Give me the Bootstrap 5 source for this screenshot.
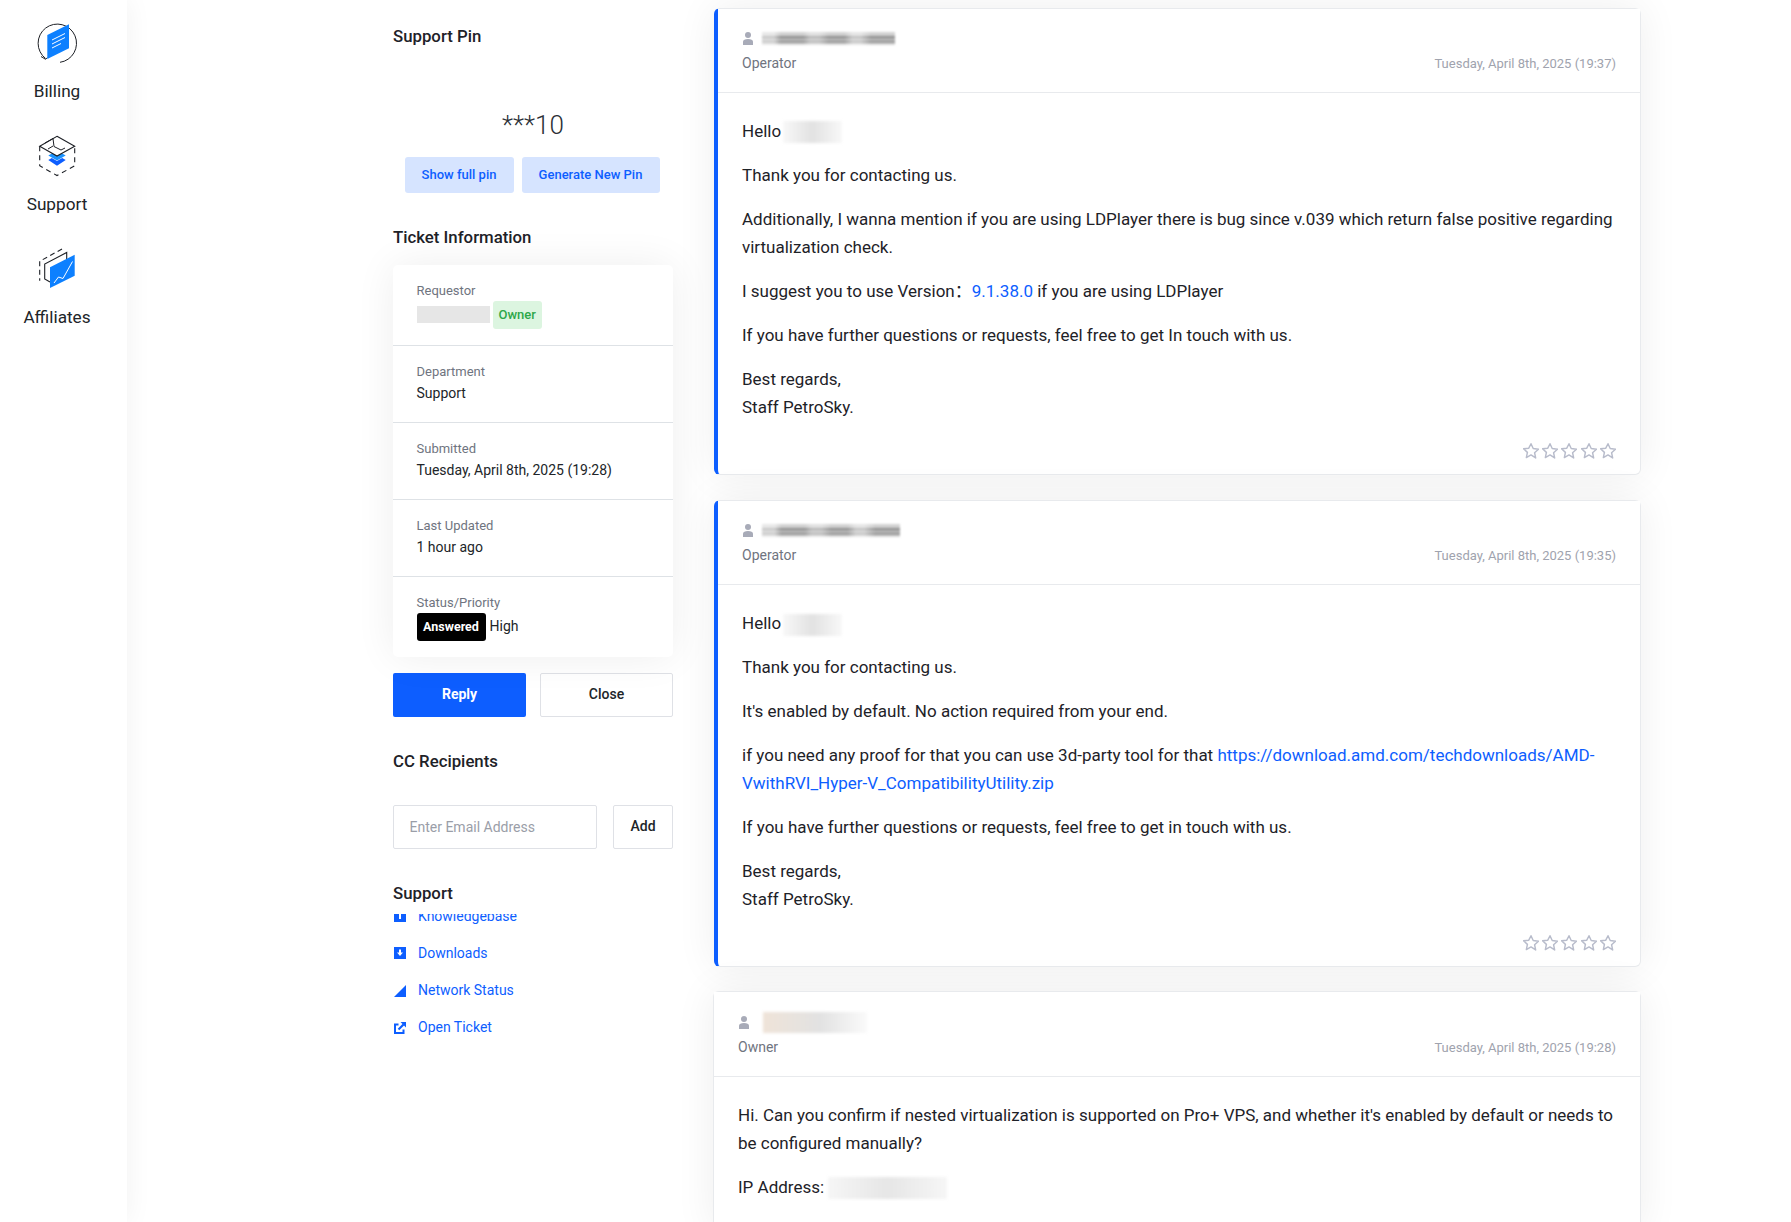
<!DOCTYPE html>
<html lang="en">
<head>
<meta charset="utf-8">
<title>Ticket</title>
<link href="https://cdn.jsdelivr.net/npm/bootstrap@5.3.0/dist/css/bootstrap.min.css" rel="stylesheet">
<style>
  html, body { height: 100%; overflow: hidden; }
  body { font-family: Roboto, "Noto Sans CJK SC", sans-serif; font-size: 17px; color: #1e2228; background: #fff; }
  a { color: #0d5eff; text-decoration: none; }

  /* left rail */
  .rail { width: 127px; flex: none; padding: 20px 13px 0 0; background: #fff; box-shadow: 0 0 26px rgba(0,0,0,.06); z-index: 2; }
  .rail-item { display: block; color: #212529; text-align: center; margin-bottom: 30px; line-height: 24px; font-size: 17.200px; }
  .rail-item svg { display: block; margin: 0 auto 13px; }

  .page { padding-left: 266px; gap: 41px; }
  .side { width: 280px; flex: none; padding-top: 24px; }
  .feed { width: 927px; flex: none; padding-top: 8px; }

  .side h6 { font-size: 16.800px; font-weight: 500; line-height: 24px; margin: 0; }
  .pin { font-size: 26px; font-weight: 300; line-height: 42px; text-align: center; margin: 56px 0 11px; color: #2b2f36; }
  .pin-actions { padding-right: 2px; }
  .btn-soft { background: #d6e4ff; color: #0d5eff; border: 0; font-size: 13px; font-weight: 500; height: 36px; padding: 0; border-radius: 3px; }
  .info { border: 0; border-radius: 8px; box-shadow: 0 0 40px rgba(0,0,0,.07); --bs-list-group-border-color: #e8eaed; }
  .info .list-group-item { padding: 16px 24px 16px 23.500px; }
  .info small { display: block; font-size: 13px; line-height: 20px; color: #6f7480; }
  .info .val { font-size: 14px; line-height: 22px; height: 24px; color: #212529; }
  .info .val.tall { height: 28px; line-height: 26px; }
  .tag { display: inline-block; height: 28px; line-height: 28px; padding: 0 6px; font-size: 13px; font-weight: 500; border-radius: 3px; vertical-align: top; }
  .tag-owner { background: #dcf5e0; color: #2ea84a; margin-left: 3px; }
  .tag-answered { background: #000; color: #fff; font-size: 12.500px; font-weight: 700; margin-right: 4px; width: 69px; text-align: center; padding: 0; }
  .btn-reply { background: #0d5eff; color: #fff; border: 0; height: 44px; padding-bottom: 8px; font-size: 14px; font-weight: 700; border-radius: 2px; }
  .btn-line { background: #fff; color: #212529; border: 1px solid #dfe1e6; height: 44px; padding-bottom: 8px; font-size: 14px; font-weight: 500; border-radius: 2px; }
  .email { height: 44px; width: 204px; border: 1px solid #dfe1e6; border-radius: 2px; font-size: 14px; padding: 0 15.500px; }
  .email::placeholder { color: #9a9ea8; }
  .support-clip { overflow: hidden; margin-top: 9px; }
  .support-clip ul { margin: -16.400px 0 0; padding: 0; list-style: none; font-size: 14px; }
  .support-clip li { height: 37.200px; line-height: 37.200px; display: flex; align-items: center; }
  .support-clip svg { margin: 0 12px 0 1px; flex: none; }

  /* replies */
  .reply-card { border: 1px solid #e8eaed; border-radius: 6px; box-shadow: 0 0 40px rgba(0,0,0,.07); margin-bottom: 24.500px; --bs-card-inner-border-radius: 0; }
  .reply-card.staff { border-left: 4px solid #0d5eff; }
  .reply-card:not(.staff) { margin-left: -1px; }
  .reply-card:not(.staff) .card-header { padding-top: 20px; }
  .reply-card .card-header { background: #fff; padding: 19px 24px 18px; border-bottom: 1px solid #e8eaed; height: 84.500px; }
  .reply-card:first-child .card-header { height: 83.500px; }
  .reply-card .card-body { padding: 24px 24px 14.500px; line-height: 28px; }
  .reply-card:first-child .card-body { padding-bottom: 15.500px; }
  .reply-card p { margin-bottom: 16px; }
  .who { height: 21px; }
  .who svg { margin: 0 9px 0 1px; flex: none; }
  .role { font-size: 14px; line-height: 20px; color: #6f7480; }
  .when { font-size: 13px; line-height: 20px; color: #a0a3ae; margin-bottom: -1px; }
  .stars { gap: 3.300px; height: 16px; margin-top: 22px; }
  .stars svg { display: block; }

  /* blurred-out names */
  .redact { display: inline-block; background: #e4e4e4; filter: blur(1.500px); vertical-align: middle; }
  .r-req { width: 73px; height: 17px; margin: 5px 0 0 0; vertical-align: top; background: #e6e6e6; filter: none; }
  .r-name { width: 133px; height: 13px; filter: blur(1px); background:
    linear-gradient(90deg, rgba(255,255,255,.5) 0 9%, rgba(255,255,255,0) 14% 31%, rgba(255,255,255,.35) 36% 43%, rgba(255,255,255,0) 50% 62%, rgba(255,255,255,.45) 68% 74%, rgba(255,255,255,0) 82% 100%),
    linear-gradient(180deg, #d2d2d2 0 28%, #8e8e8e 28% 48%, #b4b4b4 48% 68%, #9a9a9a 68% 82%, #d6d6d6 82% 100%); }
  .r-name2 { width: 138px; }
  .r-hello { width: 59px; height: 22px; margin-left: -2.500px; background: linear-gradient(90deg, #f8f8f8, #e2e2e2 50%, #f8f8f8); }
  .r-owner { width: 104px; height: 21px; margin-left: 5px; background: linear-gradient(90deg, #efe3d8, #e2e2e2 55%, #fafafa); }
  .r-ip { width: 119px; height: 22px; background: linear-gradient(90deg, #f6f6f6, #e6e6e6 50%, #f6f6f6); }
</style>
</head>
<body>
<div class="d-flex h-100">
  <!-- left rail -->
  <nav class="rail">
    <a class="rail-item" href="#">
      <svg width="46" height="46" viewBox="34 20 46 46" fill="none">
        <path d="M60 62.300A19.200 19.200 0 1 0 45.600 58.500" stroke="#1d2026" stroke-width="1"/>
        <path d="M41 56.500l4.600 2.800 1.800-1.800" stroke="#1d2026" stroke-width="1"/>
        <path d="M47.300 35 69 24.300v24L47.300 59z" fill="#0d80ff"/>
        <path d="M52 40l13-6.500M52 44l13-6.500M52 48l9-4.500" stroke="#fff" stroke-width="1"/>
      </svg>Billing
    </a>
    <a class="rail-item" href="#">
      <svg width="46" height="46" viewBox="34 133 46 46" fill="none">
        <path d="M48.300 155.500l8.700-5 8.700 5-8.700 5z" fill="#1b93ff"/>
        <path d="M48.300 160l8.700 5.700 8.700-5.700-3.500-2-5.200 3-5.200-3z" fill="#0d5eff"/>
        <path d="M57 136.300 74.700 146.300 57 156 39.700 146.300z" stroke="#1d2026" stroke-width="1.100" fill="#fff"/>
        <path d="M45 143l8-4.500 1 8 7 3.500 M53 146l-5 3 M61 150l4-2" stroke="#1d2026" stroke-width="1"/>
        <path d="M39.700 146.300v19.500L57 175.500l17.700-9.700v-19.500" stroke="#1d2026" stroke-width="1.100" stroke-dasharray="5 4"/>
      </svg>Support
    </a>
    <a class="rail-item" href="#">
      <svg width="46" height="46" viewBox="34 247 46 46" fill="none">
        <path d="M62 250 39.700 262.300v19.500" stroke="#1d2026" stroke-width="1.100" stroke-dasharray="5 3.500"/>
        <path d="M50 283 44.700 280v-15l22-11.500v12" stroke="#1d2026" stroke-width="1.100"/>
        <path d="M50 268.300 74.700 255.700v21L50 289z" fill="#0d80ff"/>
        <path d="M54 284l4.500-6 4.500 1.500 9.500-17" stroke="#fff" stroke-width="1"/>
      </svg>Affiliates
    </a>
  </nav>

  <main class="page d-flex flex-grow-1 overflow-hidden">
    <!-- ticket side column -->
    <aside class="side">
      <h6>Support Pin</h6>
      <div class="pin">***10</div>
      <div class="pin-actions d-flex justify-content-center gap-2">
        <button class="btn btn-soft" style="width:109px">Show full pin</button>
        <button class="btn btn-soft" style="width:138px">Generate New Pin</button>
      </div>

      <h6 class="mt-4 pt-2 mb-3">Ticket Information</h6>
      <div class="card info">
        <ul class="list-group list-group-flush">
          <li class="list-group-item"><small>Requestor</small><div class="val tall d-flex"><span class="redact r-req"></span><span class="tag tag-owner">Owner</span></div></li>
          <li class="list-group-item"><small>Department</small><div class="val">Support</div></li>
          <li class="list-group-item"><small>Submitted</small><div class="val">Tuesday, April 8th, 2025 (19:28)</div></li>
          <li class="list-group-item"><small>Last Updated</small><div class="val">1 hour ago</div></li>
          <li class="list-group-item"><small>Status/Priority</small><div class="val tall d-flex"><span class="tag tag-answered">Answered</span>High</div></li>
        </ul>
      </div>

      <div class="d-flex justify-content-between mt-3">
        <button class="btn btn-reply" style="width:133px">Reply</button>
        <button class="btn btn-line" style="width:133px">Close</button>
      </div>

      <h6 class="mt-4 pt-2">CC Recipients</h6>
      <div class="d-flex justify-content-between mt-4 pt-2">
        <input class="form-control email" type="text" placeholder="Enter Email Address">
        <button class="btn btn-line" style="width:60px">Add</button>
      </div>

      <h6 class="mt-4 pt-2">Support</h6>
      <div class="support-clip">
        <ul>
          <li><svg width="12" height="12" viewBox="0 0 12 12"><path d="M0 0h12v12H0z" fill="#0d5eff"/><path d="M5 3h2v6H5z" fill="#fff"/></svg><a href="#">Knowledgebase</a></li>
          <li><svg width="12" height="12" viewBox="0 0 12 12"><path d="M0 0h12v12H0z" fill="#0d5eff"/><path d="M5 2.500h2v3h2L6 9 3 5.500h2z" fill="#fff"/></svg><a href="#">Downloads</a></li>
          <li><svg width="12" height="12" viewBox="0 0 12 12"><path d="M0 12 12 0v12z" fill="#0d5eff"/></svg><a href="#">Network Status</a></li>
          <li><svg width="12" height="12" viewBox="0 0 12 12" fill="none"><path d="M4.500 2.500H1v8.500h8.500V7.500" stroke="#0d5eff" stroke-width="2"/><path d="M4.500 7.500l5-5" stroke="#0d5eff" stroke-width="2.200"/><path d="M6.500 0H12v5.500z" fill="#0d5eff"/></svg><a href="#">Open Ticket</a></li>
        </ul>
      </div>
    </aside>

    <!-- replies -->
    <section class="feed">
      <div class="card reply-card staff">
        <div class="card-header">
          <div class="who d-flex align-items-center"><svg width="10" height="13" viewBox="0 0 10 13"><circle cx="5" cy="3" r="3" fill="#a8abb8"/><path d="M0 13V9.500C0 8 2 7 5 7s5 1 5 2.500V13z" fill="#a8abb8"/></svg><span class="redact r-name"></span></div>
          <div class="d-flex justify-content-between align-items-end mt-1"><span class="role">Operator</span><span class="when">Tuesday, April 8th, 2025 (19:37)</span></div>
        </div>
        <div class="card-body">
          <p>Hello <span class="redact r-hello"></span></p>
          <p>Thank you for contacting us.</p>
          <p>Additionally, I wanna mention if you are using LDPlayer there is bug since v.039 which return false positive regarding virtualization check.</p>
          <p>I suggest you to use Version：<a href="#">9.1.38.0</a> if you are using LDPlayer</p>
          <p>If you have further questions or requests, feel free to get In touch with us.</p>
          <p>Best regards,<br>Staff PetroSky.</p>
          <div class="stars d-flex justify-content-end" data-stars></div>
        </div>
      </div>

      <div class="card reply-card staff">
        <div class="card-header">
          <div class="who d-flex align-items-center"><svg width="10" height="13" viewBox="0 0 10 13"><circle cx="5" cy="3" r="3" fill="#a8abb8"/><path d="M0 13V9.500C0 8 2 7 5 7s5 1 5 2.500V13z" fill="#a8abb8"/></svg><span class="redact r-name r-name2"></span></div>
          <div class="d-flex justify-content-between align-items-end mt-1"><span class="role">Operator</span><span class="when">Tuesday, April 8th, 2025 (19:35)</span></div>
        </div>
        <div class="card-body">
          <p>Hello <span class="redact r-hello"></span></p>
          <p>Thank you for contacting us.</p>
          <p>It's enabled by default. No action required from your end.</p>
          <p>if you need any proof for that you can use 3d-party tool for that <a href="#">https://download.amd.com/techdownloads/AMD-VwithRVI_Hyper-V_CompatibilityUtility.zip</a></p>
          <p>If you have further questions or requests, feel free to get in touch with us.</p>
          <p>Best regards,<br>Staff PetroSky.</p>
          <div class="stars d-flex justify-content-end" data-stars></div>
        </div>
      </div>

      <div class="card reply-card">
        <div class="card-header">
          <div class="who d-flex align-items-center"><svg width="10" height="13" viewBox="0 0 10 13"><circle cx="5" cy="3" r="3" fill="#a8abb8"/><path d="M0 13V9.500C0 8 2 7 5 7s5 1 5 2.500V13z" fill="#a8abb8"/></svg><span class="redact r-owner"></span></div>
          <div class="d-flex justify-content-between align-items-end mt-1"><span class="role">Owner</span><span class="when">Tuesday, April 8th, 2025 (19:28)</span></div>
        </div>
        <div class="card-body">
          <p>Hi. Can you confirm if nested virtualization is supported on Pro+ VPS, and whether it's enabled by default or needs to be configured manually?</p>
          <p>IP Address: <span class="redact r-ip"></span></p>
        </div>
      </div>
    </section>
  </main>
</div>

<script src="https://cdn.jsdelivr.net/npm/bootstrap@5.3.0/dist/js/bootstrap.bundle.min.js"></script>
<script>
  // five empty rating stars per reply
  const star = '<svg width="16" height="16" viewBox="1.500 1.500 21 21" fill="none"><path d="M12 2.500l2.900 6.300 6.900.8-5.100 4.700 1.400 6.800L12 17.200l-6.100 3.400 1.400-6.800-5.100-4.700 6.900-.8z" stroke="#b8bccb" stroke-width="1.900" stroke-linejoin="round"/></svg>';
  document.querySelectorAll('[data-stars]').forEach(el => { el.innerHTML = star.repeat(5); });
</script>
</body>
</html>
